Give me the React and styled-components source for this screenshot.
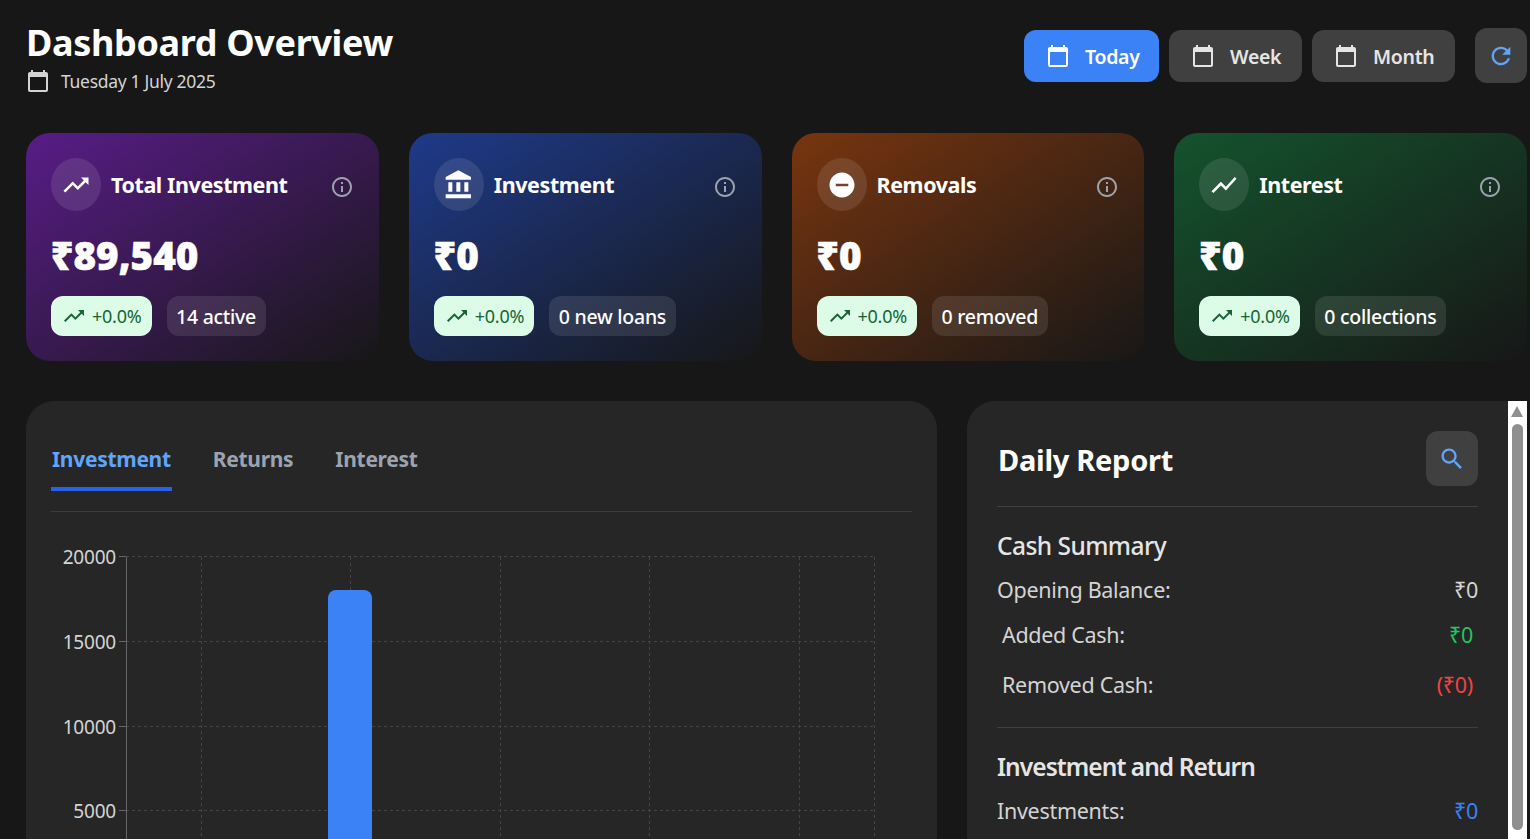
import React from "react";
import styled, { createGlobalStyle } from "styled-components";

const ICONS = {
  calendar: "M20 3h-1V1h-2v2H7V1H5v2H4c-1.1 0-2 .9-2 2v16c0 1.1.9 2 2 2h16c1.1 0 2-.9 2-2V5c0-1.1-.9-2-2-2zm0 18H4V8h16v13z",
  trending: "M16 6l2.29 2.29-4.88 4.88-4-4L2 16.59 3.41 18l6-6 4 4 6.3-6.29L22 12V6z",
  bank: "M4 10v7h3v-7H4zm6 0v7h3v-7h-3zM2 22h19v-3H2v3zm14-12v7h3v-7h-3zm-4.5-9L2 6v2h19V6l-9.5-5z",
  remove: "M12 2C6.48 2 2 6.48 2 12s4.48 10 10 10 10-4.48 10-10S17.52 2 12 2zm5 11H7v-2h10v2z",
  chart: "M3.5 18.49l6-6.01 4 4L22 6.92l-1.41-1.41-7.09 7.97-4-4L2 16.99z",
  info: "M11 7h2v2h-2zm0 4h2v6h-2zm1-9C6.48 2 2 6.48 2 12s4.48 10 10 10 10-4.48 10-10S17.52 2 12 2zm0 18c-4.41 0-8-3.59-8-8s3.59-8 8-8 8 3.59 8 8-3.59 8-8 8z",
  refresh: "M17.65 6.35C16.2 4.9 14.21 4 12 4c-4.42 0-7.99 3.58-7.99 8s3.57 8 7.99 8c3.73 0 6.84-2.55 7.73-6h-2.08c-.82 2.33-3.04 4-5.65 4-3.31 0-6-2.69-6-6s2.69-6 6-6c1.66 0 3.14.69 4.22 1.78L13 11h7V4l-2.35 2.35z",
  search: "M15.5 14h-.79l-.28-.27C15.41 12.59 16 11.11 16 9.5 16 5.91 13.09 3 9.5 3S3 5.91 3 9.5 5.91 16 9.5 16c1.61 0 3.09-.59 4.23-1.57l.27.28v.79l5 4.99L20.49 19l-4.99-5zm-6 0C7.01 14 5 11.99 5 9.5S7.01 5 9.5 5 14 7.01 14 9.5 11.99 14 9.5 14z",
};

const CARDS = [
  { title: "Total Investment", icon: "trending", amount: "₹89,540", note: "14 active", from: "#581c87" },
  { title: "Investment", icon: "bank", amount: "₹0", note: "0 new loans", from: "#1e3a8a" },
  { title: "Removals", icon: "remove", amount: "₹0", note: "0 removed", from: "#78350f" },
  { title: "Interest", icon: "chart", amount: "₹0", note: "0 collections", from: "#14532d" },
];

const GlobalStyle = createGlobalStyle`
  html, body {
    margin: 0;
    height: 100%;
    overflow: hidden;
    background: #171717;
  }
  body {
    font-family: "Noto Sans", "Open Sans", sans-serif;
    color: #fff;
  }
`;

const Page = styled.div`
  height: 839px;
  overflow: hidden;
  box-sizing: border-box;
  padding: 28px 3px 0 26px;
`;

const Header = styled.header`
  display: flex;
  justify-content: space-between;
  align-items: flex-start;
  height: 105px;
`;

const TitleBlock = styled.div`
  display: flex;
  flex-direction: column;
`;

const Title = styled.h1`
  margin: 0;
  font-size: 36px;
  line-height: 30px;
  font-weight: 700;
  letter-spacing: -0.35px;
`;

const DateRow = styled.div`
  display: flex;
  align-items: center;
  gap: 11px;
  margin-top: 11px;
  font-size: 17.5px;
  line-height: 24px;
  letter-spacing: -0.3px;
  color: #d4d4d4;
`;

const Icon = styled.svg`
  display: block;
  flex: none;
  width: ${(p) => p.$size || 24}px;
  height: ${(p) => p.$size || 24}px;
  fill: ${(p) => p.$color || "currentColor"};
`;

const Actions = styled.div`
  display: flex;
  align-items: flex-start;
  gap: 10px;
`;

const RangeButton = styled.button`
  display: flex;
  align-items: center;
  gap: 15px;
  height: 52px;
  width: ${(p) => p.$width}px;
  margin-top: 2px;
  padding: 0 0 0 22px;
  border: 0;
  border-radius: 12px;
  background: ${(p) => (p.$active ? "#3b82f6" : "#404040")};
  color: ${(p) => (p.$active ? "#fff" : "#e5e5e5")};
  font: 600 19.5px "Noto Sans", sans-serif;
  letter-spacing: -0.3px;
`;

const RefreshButton = styled.button`
  display: flex;
  align-items: center;
  justify-content: center;
  width: 52px;
  height: 55px;
  margin-left: 10px;
  padding: 0;
  border: 0;
  border-radius: 12px;
  background: #404040;
`;

const CardGrid = styled.section`
  display: grid;
  grid-template-columns: repeat(4, 1fr);
  gap: 30px;
`;

const Card = styled.article`
  box-sizing: border-box;
  height: 228px;
  padding: 25px;
  border-radius: 24px;
  background: linear-gradient(to bottom right, ${(p) => p.$from}, #171717);
`;

const CardTop = styled.div`
  display: flex;
  align-items: flex-start;
`;

const IconCircle = styled.div`
  display: flex;
  align-items: center;
  justify-content: center;
  flex: none;
  width: 50px;
  height: 53px;
  margin-right: 10px;
  border-radius: 50%;
  background: rgba(255, 255, 255, 0.1);
`;

const CardTitle = styled.h3`
  flex: 1;
  margin: 0;
  font-size: 21.5px;
  line-height: 53px;
  height: 53px;
  font-weight: 700;
  letter-spacing: -0.42px;
`;

const InfoButton = styled.span`
  display: block;
  margin: 17px 0 0;
  color: #9ca3af;
`;

const Amount = styled.div`
  margin: 22px 0 0 0;
  font-size: 38.5px;
  line-height: 44px;
  font-weight: 900;
  -webkit-text-stroke: 0.6px #fff;
`;

const TagRow = styled.div`
  display: flex;
  gap: 15px;
  margin-top: 19px;
`;

const GrowthTag = styled.span`
  display: flex;
  align-items: center;
  gap: 6px;
  box-sizing: border-box;
  width: 100.5px;
  height: 40px;
  padding: 0 0 0 11px;
  border-radius: 12px;
  background: #dcfce7;
  color: #166534;
  font-size: 18px;
  letter-spacing: -0.25px;
`;

const NoteTag = styled.span`
  display: flex;
  align-items: center;
  box-sizing: border-box;
  height: 40px;
  padding: 0 10px 0 9.5px;
  border-radius: 12px;
  background: rgba(255, 255, 255, 0.1);
  font-size: 19.5px;
  font-weight: 500;
  letter-spacing: -0.25px;
`;

const BottomGrid = styled.section`
  display: grid;
  grid-template-columns: 911px 1fr;
  gap: 30px;
  margin-top: 40px;
`;

const ChartPanel = styled.div`
  height: 700px;
  box-sizing: border-box;
  padding: 30px 25px;
  border-radius: 28px;
  background: #262626;
`;

const Tabs = styled.div`
  display: flex;
  gap: 40px;
  height: 81px;
  box-sizing: border-box;
  border-bottom: 1px solid #1e3a8a;
`;

const Tab = styled.div`
  box-sizing: border-box;
  height: 60px;
  padding: 13px 1px 0;
  font-size: 21px;
  line-height: 30px;
  font-weight: 700;
  letter-spacing: -0.3px;
  color: ${(p) => (p.$active ? "#60a5fa" : "#9ca3af")};
  border-bottom: ${(p) => (p.$active ? "4px solid #2563eb" : "0")};
`;

const ChartSvg = styled.svg`
  display: block;
  margin-left: -25px;
`;

const ReportShell = styled.div`
  display: flex;
  height: 700px;
`;

const ReportPanel = styled.div`
  flex: 1;
  box-sizing: border-box;
  padding: 30px 30px 0 30px;
  border-radius: 28px 0 0 0;
  background: #262626;
`;

const ReportHeader = styled.div`
  display: flex;
  justify-content: space-between;
  box-sizing: border-box;
  height: 76px;
  border-bottom: 1px solid #404040;
`;

const ReportTitle = styled.h2`
  margin: 0 0 0 1px;
  font-size: 29px;
  line-height: 57px;
  font-weight: 700;
  letter-spacing: -0.28px;
`;

const SearchButton = styled.button`
  display: flex;
  align-items: center;
  justify-content: center;
  width: 52px;
  height: 55px;
  padding: 0;
  border: 0;
  border-radius: 12px;
  background: #404040;
`;

const Section = styled.div`
  padding: 21px 0 18px;
  border-bottom: ${(p) => (p.$last ? "0" : "1px solid #404040")};
`;

const SectionTitle = styled.h3`
  margin: 0 0 7px;
  font-size: 24.5px;
  line-height: 36px;
  font-weight: ${(p) => p.$weight || 500};
  letter-spacing: ${(p) => p.$tracking || -0.55}px;
  color: #e5e5e5;
`;

const Row = styled.div`
  display: flex;
  justify-content: space-between;
  align-items: center;
  font-size: 21.5px;
  letter-spacing: -0.3px;
  height: ${(p) => p.$height || 36}px;
  margin-bottom: ${(p) => (p.$indent ? 0 : 2)}px;
  padding: 0 ${(p) => (p.$indent ? 5 : 0)}px;
  color: #d4d4d4;
`;

const Value = styled.span`
  color: ${(p) => p.$color || "#d4d4d4"};
`;

const ScrollTrack = styled.div`
  position: relative;
  flex: none;
  width: 19px;
  background: #fff;
`;

const ScrollArrow = styled.div`
  position: absolute;
  top: 5px;
  left: 3px;
  width: 0;
  height: 0;
  border-left: 6.5px solid transparent;
  border-right: 6.5px solid transparent;
  border-bottom: 11px solid #8f8f8f;
`;

const ScrollThumb = styled.div`
  position: absolute;
  top: 23px;
  left: 4px;
  width: 11px;
  height: 406px;
  border-radius: 6px;
  background: #8f8f8f;
`;

function MuiIcon({ name, size, color }) {
  return (
    <Icon viewBox="0 0 24 24" $size={size} $color={color}>
      <path d={ICONS[name]} />
    </Icon>
  );
}

// the viewBox uses page coordinates so the numbers can be read off the design
const TICKS = [20000, 15000, 10000, 5000];
const VERTICALS = [201, 350, 500, 649, 799, 874];
const y = (v) => Math.round(895 - (v / 5000) * 84.67) + 0.5;

function InvestmentChart() {
  const gridColor = "#454545";
  return (
    <ChartSvg width="900" height="340" viewBox="26 512 900 340">
      {TICKS.map((t) => (
        <line key={t} x1="126" x2="874" y1={y(t)} y2={y(t)} stroke={gridColor} strokeDasharray="3 3" />
      ))}
      {VERTICALS.map((x) => (
        <line key={x} x1={x + 0.5} x2={x + 0.5} y1="557" y2="851" stroke={gridColor} strokeDasharray="3 3" />
      ))}
      <line x1="126.5" x2="126.5" y1="557" y2="851" stroke="#666" />
      {TICKS.map((t) => (
        <g key={t}>
          <line x1="119" x2="126" y1={y(t)} y2={y(t)} stroke="#666" />
          <text x="116" y={y(t) + 7.5} textAnchor="end" fill="#d4d4d4" fontSize="19" letterSpacing="-0.2">
            {t}
          </text>
        </g>
      ))}
      <path d="M328 851V598a8 8 0 0 1 8-8h28a8 8 0 0 1 8 8v253z" fill="#3b82f6" />
    </ChartSvg>
  );
}

export default function App() {
  return (
    <Page>
      <GlobalStyle />
      <Header>
        <TitleBlock>
          <Title>Dashboard Overview</Title>
          <DateRow>
            <MuiIcon name="calendar" color="#d4d4d4" />
            Tuesday 1 July 2025
          </DateRow>
        </TitleBlock>
        <Actions>
          <RangeButton $active $width={135}>
            <MuiIcon name="calendar" />
            Today
          </RangeButton>
          <RangeButton $width={133}>
            <MuiIcon name="calendar" />
            Week
          </RangeButton>
          <RangeButton $width={143}>
            <MuiIcon name="calendar" />
            Month
          </RangeButton>
          <RefreshButton>
            <MuiIcon name="refresh" color="#60a5fa" size={28} />
          </RefreshButton>
        </Actions>
      </Header>

      <CardGrid>
        {CARDS.map((c) => (
          <Card key={c.title} $from={c.from}>
            <CardTop>
              <IconCircle>
                <MuiIcon name={c.icon} size={c.icon === "bank" ? 32 : 30} />
              </IconCircle>
              <CardTitle>{c.title}</CardTitle>
              <InfoButton>
                <MuiIcon name="info" />
              </InfoButton>
            </CardTop>
            <Amount>{c.amount}</Amount>
            <TagRow>
              <GrowthTag>
                <MuiIcon name="trending" />
                +0.0%
              </GrowthTag>
              <NoteTag>{c.note}</NoteTag>
            </TagRow>
          </Card>
        ))}
      </CardGrid>

      <BottomGrid>
        <ChartPanel>
          <Tabs>
            <Tab $active>Investment</Tab>
            <Tab>Returns</Tab>
            <Tab>Interest</Tab>
          </Tabs>
          <InvestmentChart />
        </ChartPanel>

        <ReportShell>
          <ReportPanel>
            <ReportHeader>
              <ReportTitle>Daily Report</ReportTitle>
              <SearchButton>
                <MuiIcon name="search" color="#60a5fa" size={28} />
              </SearchButton>
            </ReportHeader>
            <Section>
              <SectionTitle>Cash Summary</SectionTitle>
              <Row>
                <span>Opening Balance:</span>
                <Value>₹0</Value>
              </Row>
              <Row $indent $height={50}>
                <span>Added Cash:</span>
                <Value $color="#22c55e">₹0</Value>
              </Row>
              <Row $indent $height={50}>
                <span>Removed Cash:</span>
                <Value $color="#ef4444">(₹0)</Value>
              </Row>
            </Section>
            <Section $last>
              <SectionTitle $weight={600} $tracking={-0.95}>
                Investment and Return
              </SectionTitle>
              <Row>
                <span>Investments:</span>
                <Value $color="#3b82f6">₹0</Value>
              </Row>
            </Section>
          </ReportPanel>
          <ScrollTrack>
            <ScrollArrow />
            <ScrollThumb />
          </ScrollTrack>
        </ReportShell>
      </BottomGrid>
    </Page>
  );
}
